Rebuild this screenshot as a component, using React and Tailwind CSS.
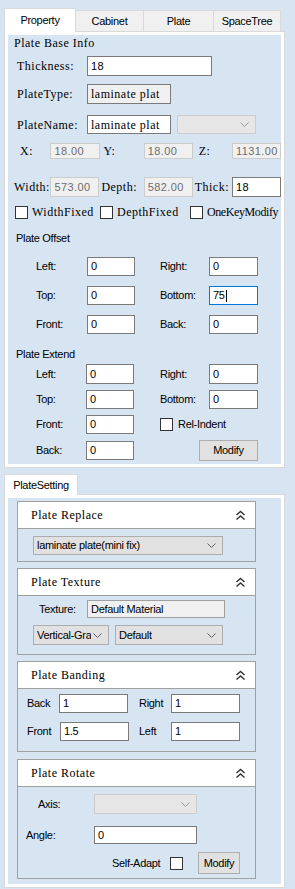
import React from 'react';

const serif = "[font-family:'Liberation_Serif',serif] text-[12px] tracking-[0.5px]";
const num = "[font-family:'Liberation_Sans',Arial,sans-serif] text-[11px] tracking-[0.4px]";
const sans = "[font-family:'Liberation_Sans',Arial,sans-serif] text-[11px] tracking-[-0.3px]";

const Chevron = ({ color = '#606060' }) => (
  <svg width="9" height="5" viewBox="0 0 9 5" className="shrink-0">
    <polyline points="0.5,0.5 4.5,4.5 8.5,0.5" fill="none" stroke={color} strokeWidth="1" />
  </svg>
);

const Collapse = () => (
  <svg width="11" height="11" viewBox="0 0 11 11">
    <polyline points="1.5,5 5.5,1.5 9.5,5" fill="none" stroke="#333" strokeWidth="1.4" />
    <polyline points="1.5,9.5 5.5,6 9.5,9.5" fill="none" stroke="#333" strokeWidth="1.4" />
  </svg>
);

const Field = ({ className = '', kind = 'normal', children }) => {
  const look = {
    normal: 'bg-white border-[#7a7a7a]',
    focused: 'bg-white border-[#0078d7]',
    readonly: 'bg-[#f0f0f0] border-[#7a7a7a]',
    disabled: 'bg-[#f0f0f0] border-[#cccccc] text-[#6d6d6d]',
  }[kind];
  return (
    <div className={`flex items-center px-[3px] border overflow-hidden whitespace-nowrap shrink-0 ${look} ${className}`}>
      {children}
    </div>
  );
};

const Combo = ({ className = '', disabled, children }) => (
  <div
    className={`flex items-center justify-between pl-[3px] pr-[6px] border overflow-hidden shrink-0 ${
      disabled ? 'bg-[#e6e6e6] border-[#cccccc]' : 'bg-[#e1e1e1] border-[#adadad]'
    } ${className}`}
  >
    <span className="overflow-hidden whitespace-nowrap min-w-0">{children}</span>
    <Chevron color={disabled ? '#9a9a9a' : '#606060'} />
  </div>
);

const Check = () => <div className="w-[13px] h-[13px] border border-[#333] bg-white shrink-0" />;

const Button = ({ className = '', children }) => (
  <div className={`flex items-center justify-center bg-[#e1e1e1] border border-[#adadad] shrink-0 ${className}`}>
    {children}
  </div>
);

const Panel = ({ title, className, children }) => (
  <div className={`flex flex-col border border-[#a0a0a0] ${className}`}>
    <div className={`h-[27px] bg-white border-b border-[#a0a0a0] flex items-center justify-between pl-[13px] pr-[9px] ${serif}`}>
      <span>{title}</span>
      <Collapse />
    </div>
    <div className="flex-1">{children}</div>
  </div>
);

export default function App() {
  return (
    <div className="w-[295px] h-[889px] bg-[#d7e4f2] overflow-hidden text-black">
      {/* Main tabs */}
      <div className={`pt-[7px] pl-[4px] flex items-end h-[31px] ${sans}`}>
        <div className="w-[72px] h-[24px] bg-white border border-[#d9d9d9] border-b-0 flex items-center justify-center relative z-10 -mb-[1px]">
          Property
        </div>
        <div className="w-[68px] h-[21px] bg-[#f0f0f0] border border-l-0 border-[#d9d9d9] border-b-0 flex items-center justify-center">
          Cabinet
        </div>
        <div className="w-[70px] h-[21px] bg-[#f0f0f0] border border-l-0 border-[#d9d9d9] border-b-0 flex items-center justify-center">
          Plate
        </div>
        <div className="w-[67px] h-[21px] bg-[#f0f0f0] border border-l-0 border-[#d9d9d9] border-b-0 flex items-center justify-center">
          SpaceTree
        </div>
      </div>

      {/* Property page */}
      <div className="ml-[4px] w-[281px] h-[437px] border border-[#d9d9d9]">
        <div className="h-full border-[3px] border-white bg-[#d7e4f2]">
          {/* Plate Base Info */}
          <div className={serif}>
            <div className="mt-[1px] h-[14px] pl-[6px] flex items-center">Plate Base Info</div>

            <div className="mt-[6px] h-[20px] pl-[9px] flex items-center">
              <span className="w-[70px]">Thickness:</span>
              <Field className={`w-[125px] h-[20px] ${num}`}>18</Field>
            </div>

            <div className="mt-[8px] h-[20px] pl-[9px] flex items-center">
              <span className="w-[70px]">PlateType:</span>
              <Field kind="readonly" className="w-[84px] h-[20px]">laminate plat</Field>
            </div>

            <div className="mt-[11px] h-[19px] pl-[9px] flex items-center">
              <span className="w-[70px]">PlateName:</span>
              <Field className="w-[84px] h-[19px]">laminate plat</Field>
              <Combo disabled className="ml-[6px] w-[79px] h-[19px]" />
            </div>

            <div className="mt-[9px] h-[16px] pl-[12px] flex items-center">
              <span className="w-[31px]">X:</span>
              <Field kind="disabled" className={`w-[50px] h-[16px] ${num}`}>18.00</Field>
              <span className="ml-[3px] w-[41px]">Y:</span>
              <Field kind="disabled" className={`w-[49px] h-[16px] ${num}`}>18.00</Field>
              <span className="ml-[6px] w-[34px]">Z:</span>
              <Field kind="disabled" className={`w-[49px] h-[16px] ${num}`}>1131.00</Field>
            </div>

            <div className="mt-[18px] h-[20px] pl-[6px] flex items-center">
              <span className="w-[37px]">Width:</span>
              <Field kind="disabled" className={`w-[49px] h-[20px] ${num}`}>573.00</Field>
              <span className="ml-[2px] w-[43px]">Depth:</span>
              <Field kind="disabled" className={`w-[49px] h-[20px] ${num}`}>582.00</Field>
              <span className="ml-[2px] w-[38px]">Thick:</span>
              <Field className={`w-[49px] h-[20px] ${num}`}>18</Field>
            </div>

            <div className="mt-[8px] h-[14px] pl-[7px] flex items-center">
              <Check />
              <span className="ml-[4px] w-[68px]">WidthFixed</span>
              <Check />
              <span className="ml-[4px] w-[73px]">DepthFixed</span>
              <Check />
              <span className="ml-[4px] whitespace-nowrap tracking-[-0.4px]">OneKeyModify</span>
            </div>
          </div>

          {/* Plate Offset */}
          <div className={sans}>
            <div className="mt-[12px] h-[14px] pl-[8px] flex items-center">Plate Offset</div>
            {[
              ['Left:', '0', 'Right:', '0', false],
              ['Top:', '0', 'Bottom:', '75', true],
              ['Front:', '0', 'Back:', '0', false],
            ].map(([l, lv, r, rv, focus], i) => (
              <div key={l} className={`${i === 0 ? 'mt-[12px]' : 'mt-[10px]'} h-[19px] pl-[28px] flex items-center`}>
                <span className="w-[51px]">{l}</span>
                <Field className="w-[48px] h-[19px]">{lv}</Field>
                <span className="ml-[25px] w-[49px]">{r}</span>
                <Field kind={focus ? 'focused' : 'normal'} className="w-[49px] h-[19px]">
                  {rv}
                  {focus && <span className="w-px h-[12px] bg-black ml-px" />}
                </Field>
              </div>
            ))}

            {/* Plate Extend */}
            <div className="mt-[13px] h-[14px] pl-[8px] flex items-center">Plate Extend</div>
            <div className="mt-[3px] h-[20px] pl-[28px] flex items-center">
              <span className="w-[50px]">Left:</span>
              <Field className="w-[48px] h-[20px]">0</Field>
              <span className="ml-[26px] w-[49px]">Right:</span>
              <Field className="w-[49px] h-[20px]">0</Field>
            </div>
            <div className="mt-[6px] h-[19px] pl-[28px] flex items-center">
              <span className="w-[50px]">Top:</span>
              <Field className="w-[48px] h-[19px]">0</Field>
              <span className="ml-[26px] w-[49px]">Bottom:</span>
              <Field className="w-[49px] h-[19px]">0</Field>
            </div>
            <div className="mt-[6px] h-[19px] pl-[28px] flex items-center">
              <span className="w-[50px]">Front:</span>
              <Field className="w-[48px] h-[19px]">0</Field>
              <div className="ml-[26px]">
                <Check />
              </div>
              <span className="ml-[5px]">Rel-Indent</span>
            </div>
            <div className="mt-[5px] h-[22px] pl-[28px] flex items-center">
              <span className="w-[50px]">Back:</span>
              <Field className="w-[48px] h-[19px]">0</Field>
              <Button className="ml-[65px] w-[59px] h-[21px]">Modify</Button>
            </div>
          </div>
        </div>
      </div>

      {/* PlateSetting tab */}
      <div className={`mt-[6px] pl-[4px] flex items-end h-[20px] ${sans}`}>
        <div className="w-[74px] h-[21px] bg-white border border-[#d9d9d9] border-b-0 flex items-center justify-center relative z-10 -mb-[1px]">
          PlateSetting
        </div>
      </div>

      {/* PlateSetting page */}
      <div className="ml-[4px] w-[281px] h-[394px] border border-[#d9d9d9]">
        <div className={`h-full border-[3px] border-white bg-[#d7e4f2] pt-[3px] pl-[9px] ${sans}`}>
          <Panel title="Plate Replace" className="w-[239px] h-[61px]">
            <Combo className="mt-[7px] ml-[15px] w-[190px] h-[19px]">laminate plate(mini fix)</Combo>
          </Panel>

          <Panel title="Plate Texture" className="mt-[6px] w-[239px] h-[87px]">
            <div className="mt-[4px] h-[18px] pl-[21px] flex items-center">
              <span className="w-[48px]">Texture:</span>
              <Field kind="readonly" className="w-[138px] h-[18px] border-[#a0a0a0]">Default Material</Field>
            </div>
            <div className="mt-[7px] h-[20px] pl-[15px] flex items-center">
              <Combo className="w-[76px] h-[20px]">Vertical-Gra</Combo>
              <Combo className="ml-[6px] w-[108px] h-[20px]">Default</Combo>
            </div>
          </Panel>

          <Panel title="Plate Banding" className="mt-[6px] w-[239px] h-[91px]">
            <div className="mt-[5px] h-[19px] pl-[9px] flex items-center">
              <span className="w-[32px]">Back</span>
              <Field className="w-[69px] h-[19px]">1</Field>
              <span className="ml-[11px] w-[32px]">Right</span>
              <Field className="w-[69px] h-[19px]">1</Field>
            </div>
            <div className="mt-[9px] h-[19px] pl-[9px] flex items-center">
              <span className="w-[33px]">Front</span>
              <Field className="w-[69px] h-[19px]">1.5</Field>
              <span className="ml-[10px] w-[32px]">Left</span>
              <Field className="w-[69px] h-[19px]">1</Field>
            </div>
          </Panel>

          <Panel title="Plate Rotate" className="mt-[7px] w-[239px] h-[120px]">
            <div className="mt-[7px] h-[20px] pl-[20px] flex items-center">
              <span className="w-[56px]">Axis:</span>
              <Combo disabled className="w-[103px] h-[20px]" />
            </div>
            <div className="mt-[12px] h-[18px] pl-[8px] flex items-center">
              <span className="w-[68px]">Angle:</span>
              <Field className="w-[103px] h-[18px]">0</Field>
            </div>
            <div className="mt-[8px] h-[22px] pl-[94px] flex items-center">
              <span className="w-[58px]">Self-Adapt</span>
              <Check />
              <Button className="ml-[15px] w-[42px] h-[22px]">Modify</Button>
            </div>
          </Panel>
        </div>
      </div>
    </div>
  );
}
